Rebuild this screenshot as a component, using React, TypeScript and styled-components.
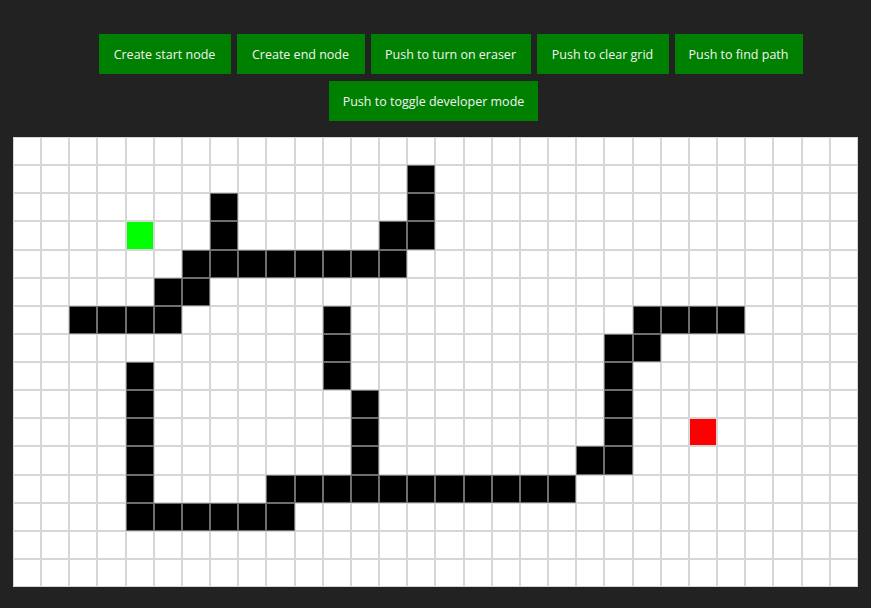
import React from 'react';
import styled, { createGlobalStyle } from 'styled-components';

const ROWS = 16;
const COLS = 30;

const START: [number, number] = [3, 4];
const END: [number, number] = [10, 24];

// walls as [row, fromCol, toCol]
const WALL_RUNS: [number, number, number][] = [
  [1, 14, 14],
  [2, 7, 7],
  [2, 14, 14],
  [3, 7, 7],
  [3, 13, 14],
  [4, 6, 13],
  [5, 5, 6],
  [6, 2, 5],
  [6, 11, 11],
  [6, 22, 25],
  [7, 11, 11],
  [7, 21, 22],
  [8, 4, 4],
  [8, 11, 11],
  [8, 21, 21],
  [9, 4, 4],
  [9, 12, 12],
  [9, 21, 21],
  [10, 4, 4],
  [10, 12, 12],
  [10, 21, 21],
  [11, 4, 4],
  [11, 12, 12],
  [11, 20, 21],
  [12, 4, 4],
  [12, 9, 19],
  [13, 4, 9],
];

type Kind = 'empty' | 'wall' | 'start' | 'end';

const walls = new Set<string>();
WALL_RUNS.forEach(([r, a, b]) => {
  for (let c = a; c <= b; c++) walls.add(`${r}-${c}`);
});

const kindOf = (r: number, c: number): Kind => {
  if (r === START[0] && c === START[1]) return 'start';
  if (r === END[0] && c === END[1]) return 'end';
  if (walls.has(`${r}-${c}`)) return 'wall';
  return 'empty';
};

const cellColors: Record<Kind, string> = {
  empty: '#ffffff',
  wall: '#000000',
  start: '#00ff00',
  end: '#ff0000',
};

//Styles
const GlobalStyle = createGlobalStyle`
  html, body {
    margin: 0;
    padding: 0;
    background: #222222;
  }
  body {
    font-family: 'Open Sans', 'Noto Sans', sans-serif;
  }
`;

const Page = styled.div`
  display: flex;
  flex-direction: column;
  padding-top: 34px;
`;

const Toolbar = styled.div`
  display: flex;
  flex-direction: column;
  gap: 7px;
`;

const ButtonRow = styled.div<{ $shift: number }>`
  display: flex;
  justify-content: center;
  gap: 6px;
  margin-left: ${props => props.$shift}px;
`;

const ActionButton = styled.button<{ $width: number }>`
  width: ${props => props.$width}px;
  height: 40px;
  padding: 0;
  border: none;
  background-color: #008000;
  color: #f4f4f4;
  font-family: 'Open Sans', 'Noto Sans', sans-serif;
  font-size: 12.5px;
  cursor: pointer;
`;

const Board = styled.div`
  display: grid;
  grid-template-columns: repeat(${COLS}, 1fr);
  grid-template-rows: repeat(${ROWS}, 1fr);
  width: 845px;
  height: 450px;
  margin: 16px 0 0 13px;
  background: #ffffff;
`;

const Cell = styled.div<{ $kind: Kind }>`
  box-sizing: border-box;
  border: 1px solid ${props => (props.$kind === 'wall' ? '#6e6e6e' : '#d6d6d6')};
  background-color: ${props => cellColors[props.$kind]};
`;

const firstRow = [
  { label: 'Create start node', width: 132 },
  { label: 'Create end node', width: 128 },
  { label: 'Push to turn on eraser', width: 160 },
  { label: 'Push to clear grid', width: 132 },
  { label: 'Push to find path', width: 128 },
];

export default function App() {
  const cells = [];
  for (let r = 0; r < ROWS; r++) {
    for (let c = 0; c < COLS; c++) {
      cells.push(<Cell key={`${r}-${c}`} $kind={kindOf(r, c)} />);
    }
  }

  return (
    <Page>
      <GlobalStyle />
      <Toolbar>
        <ButtonRow $shift={30}>
          {firstRow.map(b => (
            <ActionButton key={b.label} $width={b.width}>
              {b.label}
            </ActionButton>
          ))}
        </ButtonRow>
        <ButtonRow $shift={-4}>
          <ActionButton $width={209}>Push to toggle developer mode</ActionButton>
        </ButtonRow>
      </Toolbar>
      <Board>{cells}</Board>
    </Page>
  );
}
